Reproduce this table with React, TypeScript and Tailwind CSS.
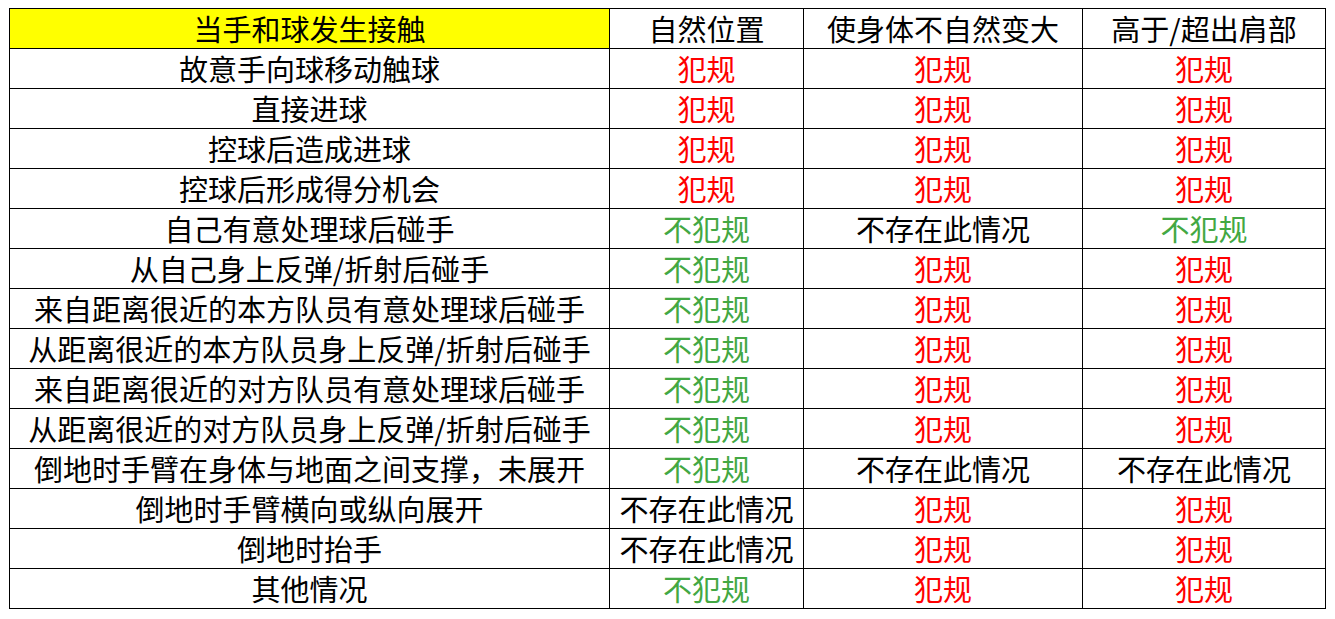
import React from "react";

type V = "f" | "n" | "x";
const rows: [string, V, V, V][] = [
  ["故意手向球移动触球", "f", "f", "f"],
  ["直接进球", "f", "f", "f"],
  ["控球后造成进球", "f", "f", "f"],
  ["控球后形成得分机会", "f", "f", "f"],
  ["自己有意处理球后碰手", "n", "x", "n"],
  ["从自己身上反弹/折射后碰手", "n", "f", "f"],
  ["来自距离很近的本方队员有意处理球后碰手", "n", "f", "f"],
  ["从距离很近的本方队员身上反弹/折射后碰手", "n", "f", "f"],
  ["来自距离很近的对方队员有意处理球后碰手", "n", "f", "f"],
  ["从距离很近的对方队员身上反弹/折射后碰手", "n", "f", "f"],
  ["倒地时手臂在身体与地面之间支撑，未展开", "n", "x", "x"],
  ["倒地时手臂横向或纵向展开", "x", "f", "f"],
  ["倒地时抬手", "x", "f", "f"],
  ["其他情况", "n", "f", "f"],
];

function Cell({ v }: { v: V }) {
  if (v === "f") return <td className="border border-black text-center text-[#ff0000] p-0">犯规</td>;
  if (v === "n") return <td className="border border-black text-center text-[#43a843] p-0">不犯规</td>;
  return <td className="border border-black text-center text-black p-0">不存在此情况</td>;
}

export default function App() {
  return (
    <div className="w-[1335px] h-[619px] bg-white pt-[8px] pl-[9px]" style={{ fontFamily: '"Microsoft YaHei", "Noto Sans CJK SC", sans-serif' }}>
      <table className="border-collapse table-fixed text-[29px] leading-none text-black">
        <colgroup>
          <col className="w-[600px]" />
          <col className="w-[194px]" />
          <col className="w-[279px]" />
          <col className="w-[243px]" />
        </colgroup>
        <tbody>
          <tr className="h-[40px]">
            <td className="border border-black bg-[#ffff00] text-center p-0">当手和球发生接触</td>
            <td className="border border-black text-center p-0">自然位置</td>
            <td className="border border-black text-center p-0">使身体不自然变大</td>
            <td className="border border-black text-center p-0">高于/超出肩部</td>
          </tr>
          {rows.map((r, i) => (
            <tr key={i} className="h-[40px]">
              <td className="border border-black text-center p-0 whitespace-nowrap">{r[0]}</td>
              <Cell v={r[1]} />
              <Cell v={r[2]} />
              <Cell v={r[3]} />
            </tr>
          ))}
        </tbody>
      </table>
    </div>
  );
}
